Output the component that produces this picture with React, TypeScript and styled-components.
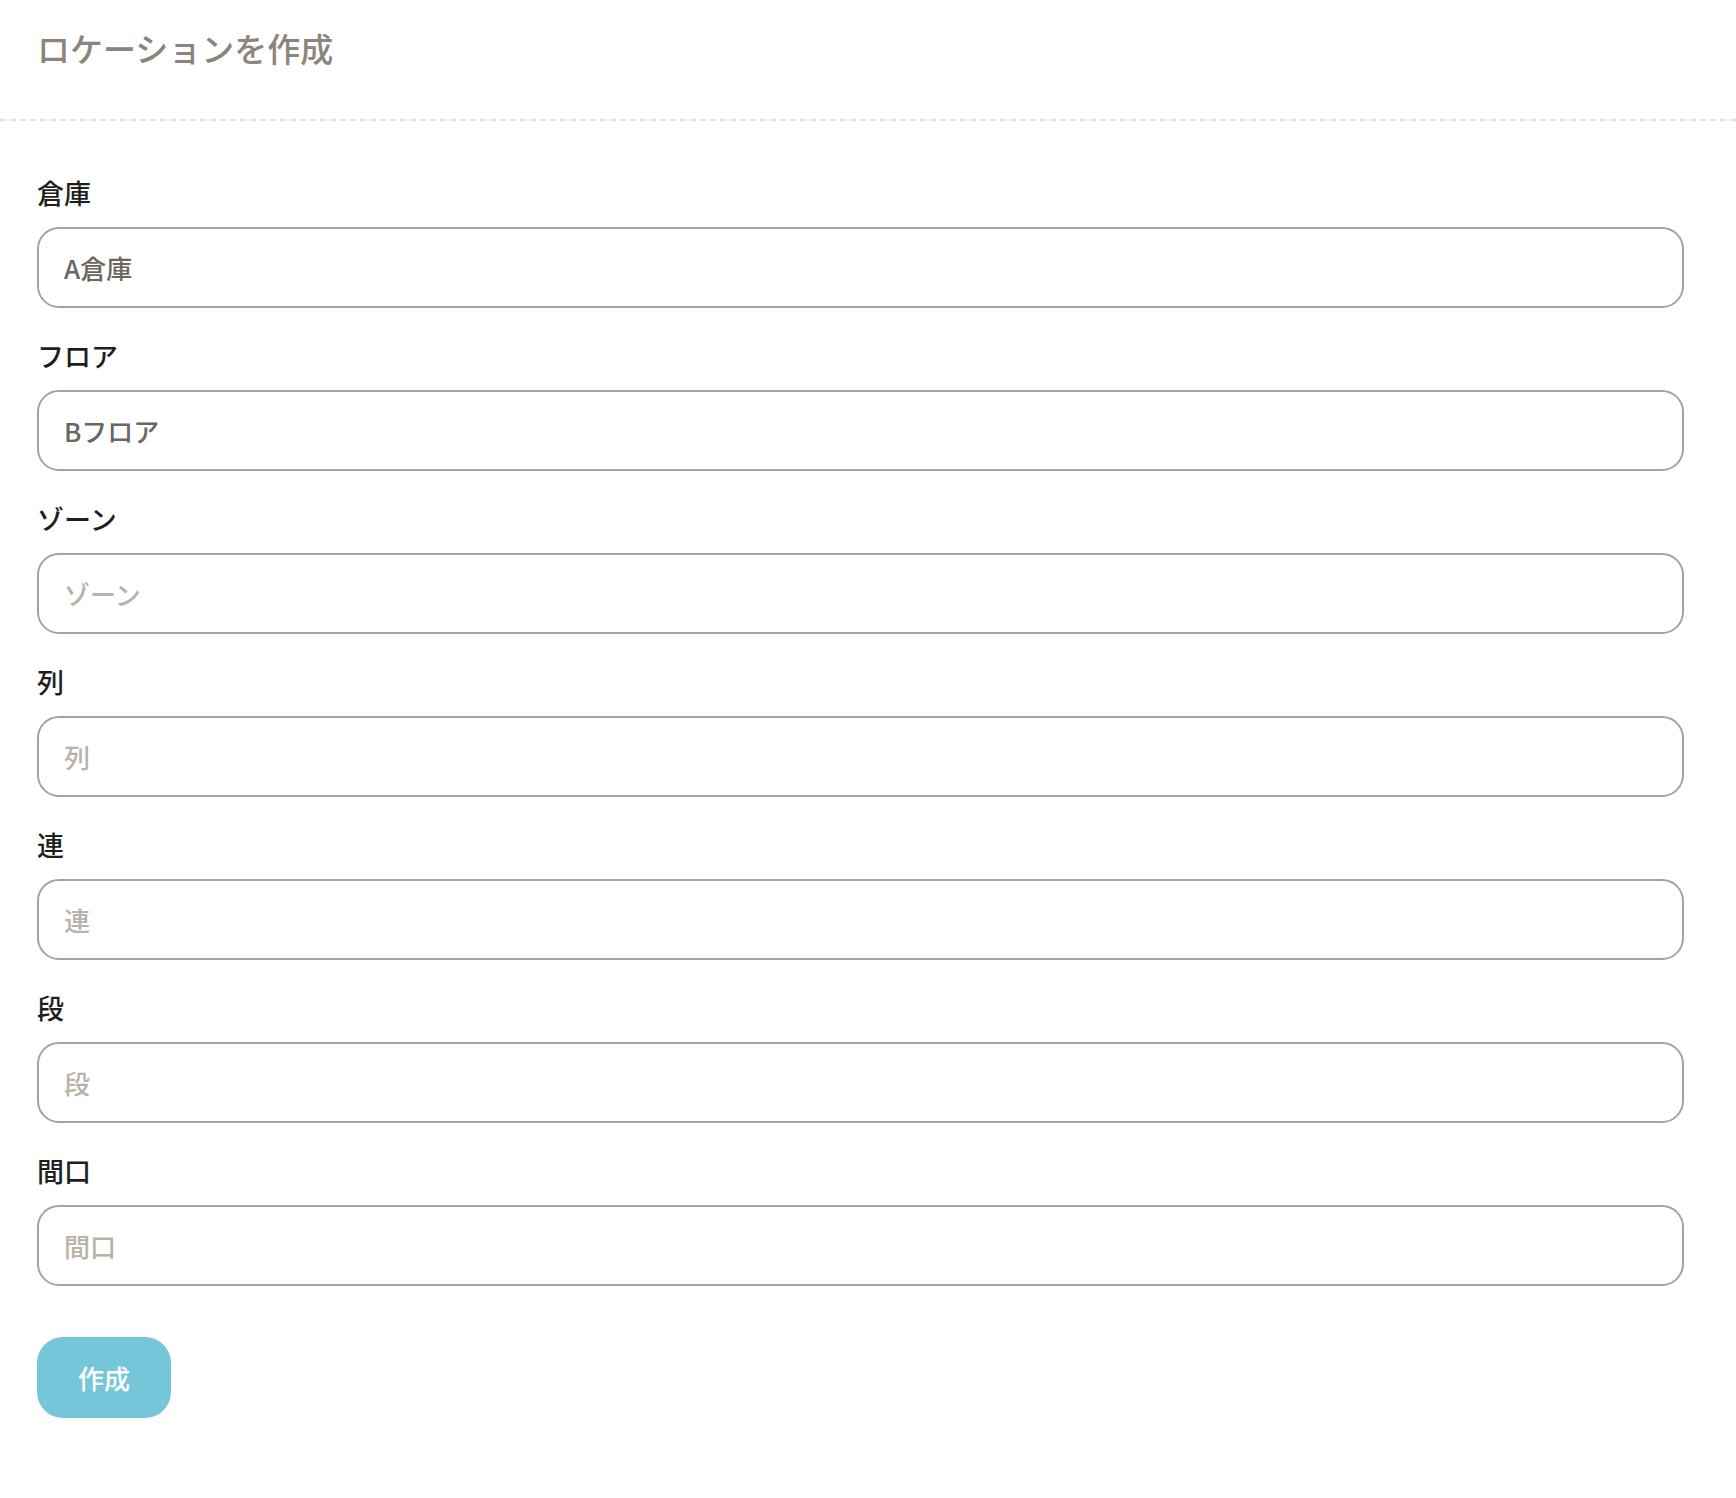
import styled, { createGlobalStyle } from 'styled-components';

const GlobalStyle = createGlobalStyle`
  html, body {
    margin: 0;
    padding: 0;
    background: #ffffff;
  }
  body {
    font-family: "Noto Sans CJK JP", "Noto Sans", sans-serif;
  }
  * {
    box-sizing: border-box;
  }
`;

const Page = styled.div`
  width: 100%;
  min-height: 1498px;
  background: #ffffff;
`;

const Header = styled.header`
  padding: 24px 37px 49px;
  position: relative;
  &::after {
    content: '';
    position: absolute;
    left: 0;
    right: 0;
    bottom: 0;
    height: 2px;
    background-image: linear-gradient(to right, #e6e3dc 6px, transparent 6px);
    background-size: 10px 2px;
  }
`;

const Title = styled.h1`
  margin: 0;
  font-size: 33px;
  line-height: 48px;
  font-weight: 500;
  color: #8b857a;
`;

const Form = styled.form`
  display: flex;
  flex-direction: column;
  gap: 28px;
  padding: 52px 52px 0 37px;
`;

const Field = styled.div`
  display: flex;
  flex-direction: column;
  gap: 15px;
`;

const Label = styled.label`
  font-size: 27px;
  line-height: 39px;
  font-weight: 500;
  color: #1f1f1f;
`;

const Input = styled.input`
  width: 100%;
  height: 81px;
  padding: 0 25px;
  border: 2px solid #a3a3a3;
  border-radius: 22px;
  background: #ffffff;
  font-family: "Noto Sans CJK JP", "Noto Sans", sans-serif;
  font-size: 26px;
  font-weight: 500;
  color: #6b6760;
  outline: none;
  &::placeholder {
    color: #b8b3a7;
  }
`;

const Actions = styled.div`
  padding-top: 23px;
`;

const SubmitButton = styled.button`
  width: 134px;
  height: 81px;
  border: none;
  border-radius: 26px;
  background: #74c6d8;
  color: #ffffff;
  font-family: "Noto Sans CJK JP", "Noto Sans", sans-serif;
  font-size: 26px;
  font-weight: 500;
  cursor: pointer;
`;

const fields = [
  { id: 'warehouse', label: '倉庫', value: 'A倉庫' },
  { id: 'floor', label: 'フロア', value: 'Bフロア' },
  { id: 'zone', label: 'ゾーン', value: '' },
  { id: 'row', label: '列', value: '' },
  { id: 'bay', label: '連', value: '' },
  { id: 'level', label: '段', value: '' },
  { id: 'frontage', label: '間口', value: '' },
];

const App = () => {
  return (
    <>
      <GlobalStyle />
      <Page>
        <Header>
          <Title>ロケーションを作成</Title>
        </Header>
        <Form onSubmit={(e) => e.preventDefault()}>
          {fields.map((f) => (
            <Field key={f.id}>
              <Label htmlFor={f.id}>{f.label}</Label>
              <Input id={f.id} defaultValue={f.value} placeholder={f.label} />
            </Field>
          ))}
          <Actions>
            <SubmitButton type="submit">作成</SubmitButton>
          </Actions>
        </Form>
      </Page>
    </>
  );
};

export default App;
